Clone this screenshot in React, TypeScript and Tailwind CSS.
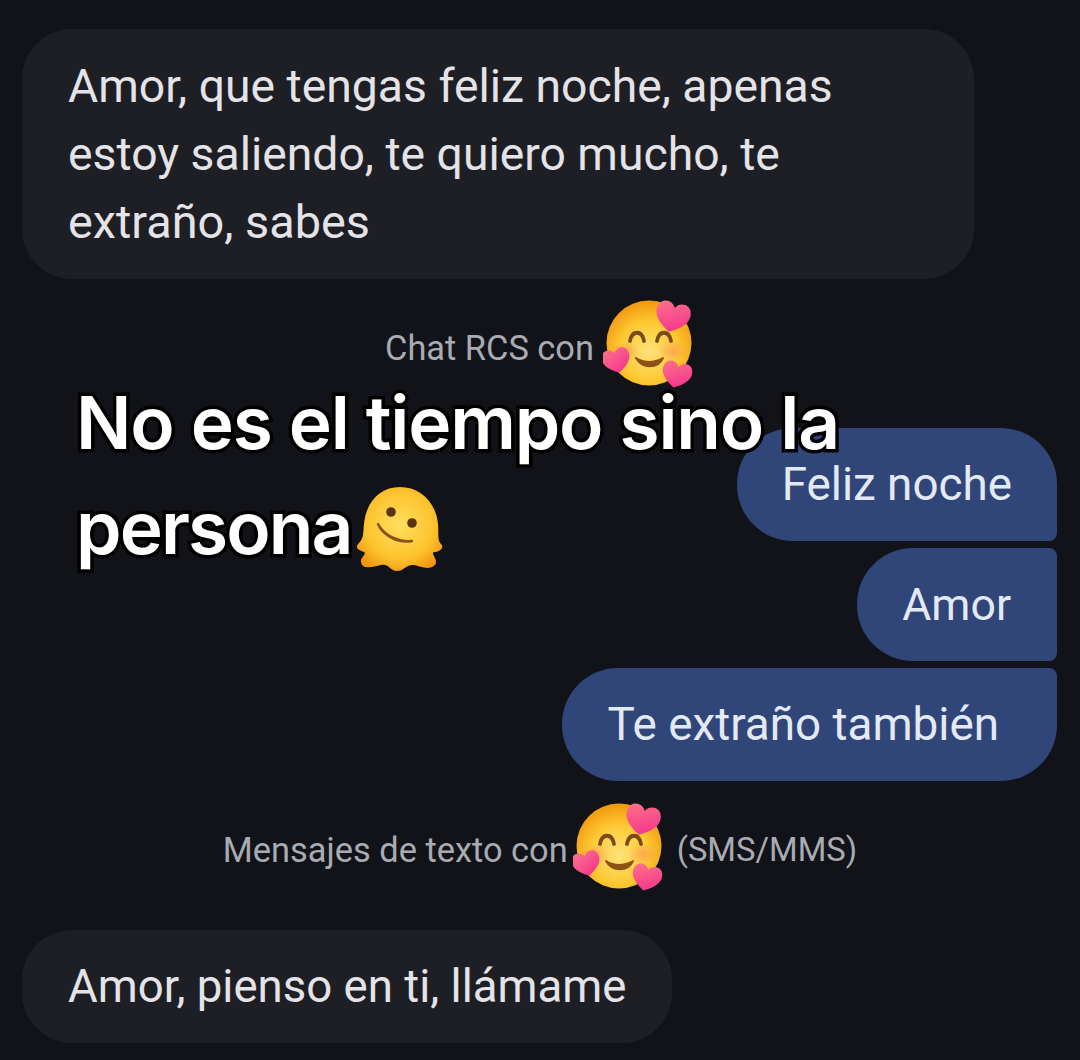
import { useId } from "react";

function Heart({ x, y, scale, rotate, id }: { x: number; y: number; scale: number; rotate: number; id: string }) {
  return (
    <path
      transform={`translate(${x} ${y}) rotate(${rotate}) scale(${scale})`}
      d="M0-10C5-21 24-21 24-3C24 10 8 20 0 24C-8 20-24 10-24-3C-24-21-5-21 0-10Z"
      fill={`url(#${id})`}
    />
  );
}

function LoveEmoji({ className }: { className: string }) {
  const id = useId().replace(/:/g, "");
  return (
    <svg viewBox="0 0 92 90" className={className}>
      <defs>
        <radialGradient id={`${id}f`} cx="0.5" cy="0.6" r="0.58">
          <stop offset="0" stopColor="#fee27a" />
          <stop offset="0.6" stopColor="#fdc933" />
          <stop offset="1" stopColor="#f29a10" />
        </radialGradient>
        <radialGradient id={`${id}b`}>
          <stop offset="0" stopColor="#f98a5c" stopOpacity="0.55" />
          <stop offset="1" stopColor="#f98a5c" stopOpacity="0" />
        </radialGradient>
        <linearGradient id={`${id}h`} x1="0.2" y1="0" x2="0.8" y2="1">
          <stop offset="0" stopColor="#fb7088" />
          <stop offset="1" stopColor="#f5308e" />
        </linearGradient>
      </defs>
      <circle cx="46" cy="45" r="42.5" fill={`url(#${id}f)`} />
      <ellipse cx="22" cy="54" rx="15" ry="11" fill={`url(#${id}b)`} />
      <ellipse cx="70" cy="53" rx="15" ry="11" fill={`url(#${id}b)`} />
      <path d="M27 43C29 32 39 32 41 43" fill="none" stroke="#7a4a1b" strokeWidth="3.8" strokeLinecap="round" />
      <path d="M54 43C56 32 66 32 68 43" fill="none" stroke="#7a4a1b" strokeWidth="3.8" strokeLinecap="round" />
      <path d="M33 60C41 65 51 65 60 60C55 71 39 71 33 60Z" fill="#8d5316" stroke="#8d5316" strokeWidth="2" strokeLinejoin="round" />
      <Heart x={70} y={17} scale={0.72} rotate={14} id={`${id}h`} />
      <Heart x={13} y={61} scale={0.58} rotate={-14} id={`${id}h`} />
      <Heart x={74} y={75} scale={0.62} rotate={14} id={`${id}h`} />
    </svg>
  );
}

function MeltingEmoji({ className }: { className: string }) {
  const id = useId().replace(/:/g, "");
  return (
    <svg viewBox="0 0 88 86" className={className}>
      <defs>
        <radialGradient id={`${id}m`} cx="0.5" cy="0.45" r="0.62">
          <stop offset="0" stopColor="#ffdf5f" />
          <stop offset="0.65" stopColor="#fdc32d" />
          <stop offset="1" stopColor="#f0930e" />
        </radialGradient>
      </defs>
      <path
        d="M45 1C65 1 81 16 83 38C84 48 82 54 86 58C90 62 84 66 79 66C75 67 84 74 80 79C74 85 65 80 59 79C51 78 49 85 42 85C35 85 34 77 26 79C18 81 7 84 6 76C5 71 12 69 9 66C4 64-1 62 4 57C9 52 8 46 9 38C11 16 25 1 45 1Z"
        fill={`url(#${id}m)`}
      />
      <circle cx="36" cy="26" r="4.8" fill="#5b3513" />
      <circle cx="57" cy="37" r="4.8" fill="#5b3513" />
      <path d="M23 38C27 48 42 58 57 55C43 56 30 50 23 38Z" fill="#8d5316" stroke="#8d5316" strokeWidth="2.4" strokeLinejoin="round" />
    </svg>
  );
}

export default function App() {
  return (
    <div className="relative h-[1060px] w-[1080px] overflow-hidden bg-[#121318] pt-[29px] font-['Roboto',sans-serif] text-[46.3px] leading-[68px] text-[#e3e3e8]">
      {/* Received */}
      <div className="ml-[22px] w-[952px] rounded-[50px] bg-[#1e1f24] px-[46px] py-[23px]">
        Amor, que tengas feliz noche, apenas
        <br />
        estoy saliendo, te quiero mucho, te
        <br />
        <span className="text-[46.8px]">extraño, sabes</span>
      </div>

      {/* RCS label */}
      <div className="mt-[48px] flex h-[42px] items-center justify-center text-[34.4px] leading-[42px] text-[#a9abb3]">
        <span>Chat RCS con</span>
        <LoveEmoji className="-mb-[24px] -mt-[34px] ml-[9px] h-[90px] w-[92px] shrink-0" />
      </div>

      {/* Sent */}
      <div className="mr-[23px] mt-[59px] flex flex-col items-end gap-[7px] text-[45.8px] text-[#e4e9f6]">
        <div className="flex h-[113px] w-[320px] items-center justify-end rounded-[56px] rounded-br-[8px] bg-[#304679] pr-[45px]">Feliz noche</div>
        <div className="flex h-[113px] w-[200px] items-center justify-end rounded-l-[56px] rounded-r-[8px] bg-[#304679] pr-[46px] text-[44.6px]">Amor</div>
        <div className="flex h-[113px] w-[495px] items-center justify-end rounded-[56px] rounded-tr-[8px] bg-[#304679] pr-[58px]">Te extraño también</div>
      </div>

      {/* SMS label */}
      <div className="mt-[48px] flex h-[42px] items-center justify-center text-[34.4px] leading-[42px] text-[#a9abb3]">
        <span>Mensajes de texto con</span>
        <LoveEmoji className="-mb-[24px] -mt-[32px] ml-[5px] h-[90px] w-[92px] shrink-0" />
        <span className="ml-[12px] text-[32.8px]">(SMS/MMS)</span>
      </div>

      <div className="ml-[22px] mt-[59px] flex h-[113px] w-[650px] items-center rounded-[50px] bg-[#1e1f24] pl-[46px] text-[45.6px]">Amor, pienso en ti, llámame</div>

      {/* Video caption overlay */}
      <div className="absolute left-[76px] top-[370px] w-[800px] font-['Inter',sans-serif] text-[73px] font-semibold leading-[105px] text-white [paint-order:stroke] [-webkit-text-stroke:7px_#000]">
        <div className="tracking-[-1.2px]">No es el tiempo sino la</div>
        <div className="flex items-center tracking-[-1.9px]">
          persona
          <MeltingEmoji className="ml-[3px] mt-[2px] h-[86px] w-[88px]" />
        </div>
      </div>
    </div>
  );
}
